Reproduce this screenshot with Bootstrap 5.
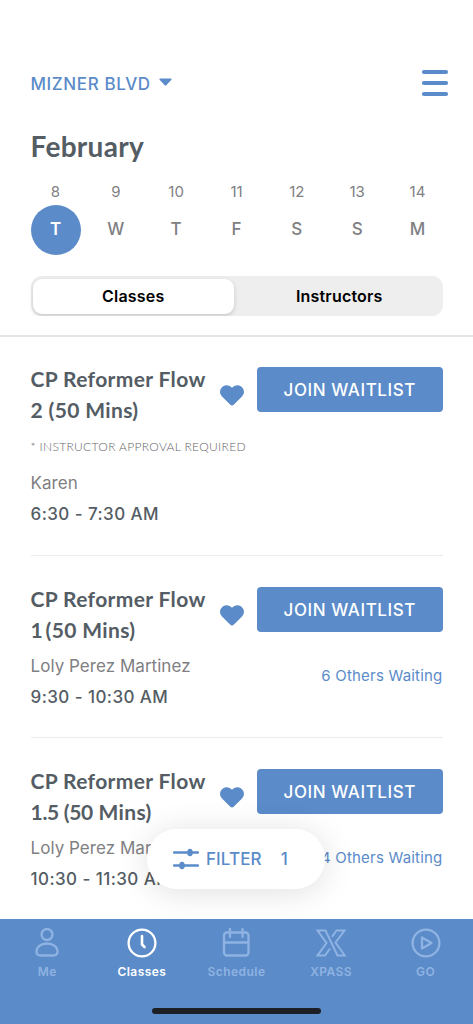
<!DOCTYPE html>
<html lang="en">
<head>
<meta charset="utf-8">
<meta name="viewport" content="width=device-width, initial-scale=1">
<title>Classes</title>
<link href="https://cdn.jsdelivr.net/npm/bootstrap@5.3.0/dist/css/bootstrap.min.css" rel="stylesheet">
<style>
:root{--brand:#5b8bc9;--ink:#545c64;--soft:#808083}
body{font-family:Inter,"Liberation Sans",sans-serif;color:var(--ink);background:#fff;height:1024px;overflow:hidden}
svg{display:block}
.brand{color:var(--brand)}
.gutter{padding-left:30.5px;padding-right:30.5px}
.screen{height:1024px}
.topbar{height:42px;margin-top:62px}
.location{font-size:17px;font-weight:500;letter-spacing:.6px;line-height:20px;padding-top:1px}
.month{font:700 28px/34px Lato,sans-serif;letter-spacing:.3px;margin:25px 0 0}
.day{width:50px}
.day-num{font-size:15px;line-height:20px;color:var(--soft);font-weight:400}
.day-name{height:50px;width:50px;margin-top:3px;font-size:17px;font-weight:500;color:var(--soft)}
.day-name.active{background:var(--brand);color:#fff;font-weight:600}
.days{margin-top:18.5px}
.segment{background:#eee;border-radius:11px;height:40px;padding:2.5px;margin-top:21.500px}
.seg-item{border-radius:9px;font-size:16px;font-weight:600;color:#000;letter-spacing:.2px}
.seg-item.on{background:#fff;box-shadow:0 2px 5px rgba(0,0,0,.16);flex:0 0 200.5px}
.seg-item:not(.on){padding-left:5px}
.rule{height:2px;background:#e5e5e6;margin-top:19px}
.session{height:182px;padding-top:29px;border-bottom:1px solid #ececec}
.session.first{height:219px;padding-top:28px}
.session.last-one{border:0}
.title{font:700 21px/30.5px Lato,sans-serif;width:180px;margin:-1px 0 5.5px;white-space:nowrap;letter-spacing:.36px}
.note{font:300 12px/38px Lato,sans-serif;color:#66666a;height:38px;padding-top:2px;white-space:nowrap;margin-top:-4.5px;margin-bottom:3.5px;letter-spacing:.34px}
.teacher{font-size:17px;line-height:31.5px;color:var(--soft);white-space:nowrap;letter-spacing:.04px}
.time{font-size:17px;line-height:31.5px;font-weight:500;white-space:nowrap;letter-spacing:.43px}
.info{width:189.5px}
.heart{margin-top:20px;width:24px;height:21px}
.actions{width:185.5px;margin-left:13px;margin-top:1.500px}
.btn-wait{background:var(--brand);color:#fff;border:0;border-radius:4px;height:45.5px;font-size:17px;font-weight:500;letter-spacing:.57px;padding:2px 0 0}
.waiting{font-size:15px;line-height:20px;margin-top:34px;letter-spacing:.2px}
.filter{left:147px;top:829px;width:178px;height:60px;background:#fff;border-radius:30px;box-shadow:0 3px 32px rgba(0,0,0,.13);font-size:17px;font-weight:500;padding-left:26px;letter-spacing:.1px}
.filter span{padding-top:2px}
.tabs{background:var(--brand);height:105px;left:0;right:0;top:919px}
.tab{flex:1 1 0;padding-top:9px;color:#8fb3e2;font-size:12px;font-weight:600;letter-spacing:.45px}
.tab svg{width:30px;height:30px;fill:none;stroke:currentColor;stroke-width:2.3;stroke-linecap:round;stroke-linejoin:round}
.tab span{line-height:16px;margin-top:6px}
.tab.on{color:#fff}
.home{width:169px;height:6px;border-radius:3px;background:#1c2024;left:152px;bottom:10px}
</style>
</head>
<body>
<div class="screen position-relative overflow-hidden">
  <header class="gutter overflow-hidden">
    <div class="topbar d-flex justify-content-between align-items-center brand">
      <div class="location d-flex align-items-center"><span>MIZNER BLVD</span>
        <svg class="ms-2" width="13" height="8" viewBox="0 0 13 8" style="margin-bottom:4px"><path d="M1 .5h11q1 .3.4 1.3L7.5 7q-1 1-2 0L.6 1.8Q0 .8 1 .5Z" fill="currentColor"/></svg>
      </div>
      <svg width="28" height="28" viewBox="0 0 28 28" style="margin-right:-6px"><path d="M3 3h22M3 14h22M3 25h22" stroke="currentColor" stroke-width="4.2" stroke-linecap="round"/></svg>
    </div>
    <h1 class="month">February</h1>
    <div class="days d-flex justify-content-between text-center">
      <div class="day"><div class="day-num">8</div><div class="day-name active rounded-circle d-flex align-items-center justify-content-center">T</div></div>
      <div class="day"><div class="day-num">9</div><div class="day-name d-flex align-items-center justify-content-center">W</div></div>
      <div class="day"><div class="day-num">10</div><div class="day-name d-flex align-items-center justify-content-center">T</div></div>
      <div class="day"><div class="day-num">11</div><div class="day-name d-flex align-items-center justify-content-center">F</div></div>
      <div class="day"><div class="day-num">12</div><div class="day-name d-flex align-items-center justify-content-center">S</div></div>
      <div class="day"><div class="day-num">13</div><div class="day-name d-flex align-items-center justify-content-center">S</div></div>
      <div class="day"><div class="day-num">14</div><div class="day-name d-flex align-items-center justify-content-center">M</div></div>
    </div>
    <div class="segment d-flex">
      <div class="seg-item on d-flex align-items-center justify-content-center">Classes</div>
      <div class="seg-item flex-fill d-flex align-items-center justify-content-center">Instructors</div>
    </div>
  </header>
  <div class="rule"></div>

  <main class="gutter">
    <article class="session first d-flex align-items-start">
      <div class="info">
        <h2 class="title">CP Reformer Flow<br>2 (50 Mins)</h2>
        <div class="note">* INSTRUCTOR APPROVAL REQUIRED</div>
        <div class="teacher">Karen</div>
        <div class="time">6:30 - 7:30 AM</div>
      </div>
      <svg class="heart brand flex-shrink-0" viewBox="0 0 24 21"><path d="M12 2.7C9.8.1 6-.6 3.2 1.2-.5 3.6-1 8.4 2 11.5l8.3 8.2q1.7 1.4 3.4 0l8.3-8.2c3-3.1 2.5-7.9-1.2-10.3C18-.6 14.2.1 12 2.7Z" fill="currentColor"/></svg>
      <div class="actions"><button class="btn btn-wait w-100">JOIN WAITLIST</button></div>
    </article>
    <article class="session d-flex align-items-start">
      <div class="info">
        <h2 class="title">CP Reformer Flow<br><span style="word-spacing:-3px">1 (50</span> Mins)</h2>
        <div class="teacher">Loly Perez Martinez</div>
        <div class="time">9:30 - 10:30 AM</div>
      </div>
      <svg class="heart brand flex-shrink-0" viewBox="0 0 24 21"><path d="M12 2.7C9.8.1 6-.6 3.2 1.2-.5 3.6-1 8.4 2 11.5l8.3 8.2q1.7 1.4 3.4 0l8.3-8.2c3-3.1 2.5-7.9-1.2-10.3C18-.6 14.2.1 12 2.7Z" fill="currentColor"/></svg>
      <div class="actions"><button class="btn btn-wait w-100">JOIN WAITLIST</button><div class="waiting brand text-end">6 Others Waiting</div></div>
    </article>
    <article class="session last-one d-flex align-items-start">
      <div class="info">
        <h2 class="title">CP Reformer Flow<br><span style="letter-spacing:-.3px">1.5 (50</span> Mins)</h2>
        <div class="teacher">Loly Perez Martinez</div>
        <div class="time">10:30 - 11:30 AM</div>
      </div>
      <svg class="heart brand flex-shrink-0" viewBox="0 0 24 21"><path d="M12 2.7C9.8.1 6-.6 3.2 1.2-.5 3.6-1 8.4 2 11.5l8.3 8.2q1.7 1.4 3.4 0l8.3-8.2c3-3.1 2.5-7.9-1.2-10.3C18-.6 14.2.1 12 2.7Z" fill="currentColor"/></svg>
      <div class="actions"><button class="btn btn-wait w-100">JOIN WAITLIST</button><div class="waiting brand text-end">4 Others Waiting</div></div>
    </article>
  </main>

  <div class="filter position-absolute d-flex align-items-center brand">
    <svg width="26" height="22" viewBox="0 0 26 22"><path d="M1 4.5h24M1 17.5h24" stroke="currentColor" stroke-width="2.3" stroke-linecap="round"/><ellipse cx="17" cy="4.5" rx="2.8" ry="3.8" fill="currentColor"/><ellipse cx="9" cy="17.5" rx="2.8" ry="3.8" fill="currentColor"/></svg>
    <span style="margin-left:7px">FILTER</span><span style="margin-left:19px">1</span>
  </div>

  <nav class="tabs position-absolute d-flex">
    <div class="tab d-flex flex-column align-items-center"><svg viewBox="0 0 30 30"><circle cx="15" cy="6.5" r="5.5"/><path d="M15 15.5C8.500 15.500 4.500 19 4.500 23.500q0 4 4.500 4h12q4.500 0 4.500-4c0-4.500-4-8-10.500-8Z"/></svg><span>Me</span></div>
    <div class="tab on d-flex flex-column align-items-center"><svg viewBox="0 0 30 30"><circle cx="15" cy="15" r="13.400"/><path d="M15 8v8.500l2.500 2.500" stroke-width="2.600"/></svg><span>Classes</span></div>
    <div class="tab d-flex flex-column align-items-center"><svg viewBox="0 0 30 30"><rect x="3" y="4.500" width="24.500" height="23" rx="3"/><path d="M3 14.500h24.500M9 1v8M21.500 1v8"/></svg><span>Schedule</span></div>
    <div class="tab d-flex flex-column align-items-center"><svg viewBox="0 0 30 30" style="stroke-width:2;stroke-linejoin:miter;stroke-linecap:butt"><path d="M14 20.500 9 27.500H1.500L10.500 15 1.500 2.500H9.500L21.500 27.500H28.800L19.500 14.500 28.500 2.500H20.500L16 8.800"/></svg><span>XPASS</span></div>
    <div class="tab d-flex flex-column align-items-center"><svg viewBox="0 0 30 30"><circle cx="15" cy="15" r="13.400"/><path d="M11 9.500v11l9.500-5.500Z"/></svg><span>GO</span></div>
    <div class="home position-absolute"></div>
  </nav>
</div>
<script src="https://cdn.jsdelivr.net/npm/bootstrap@5.3.0/dist/js/bootstrap.bundle.min.js"></script>
</body>
</html>
